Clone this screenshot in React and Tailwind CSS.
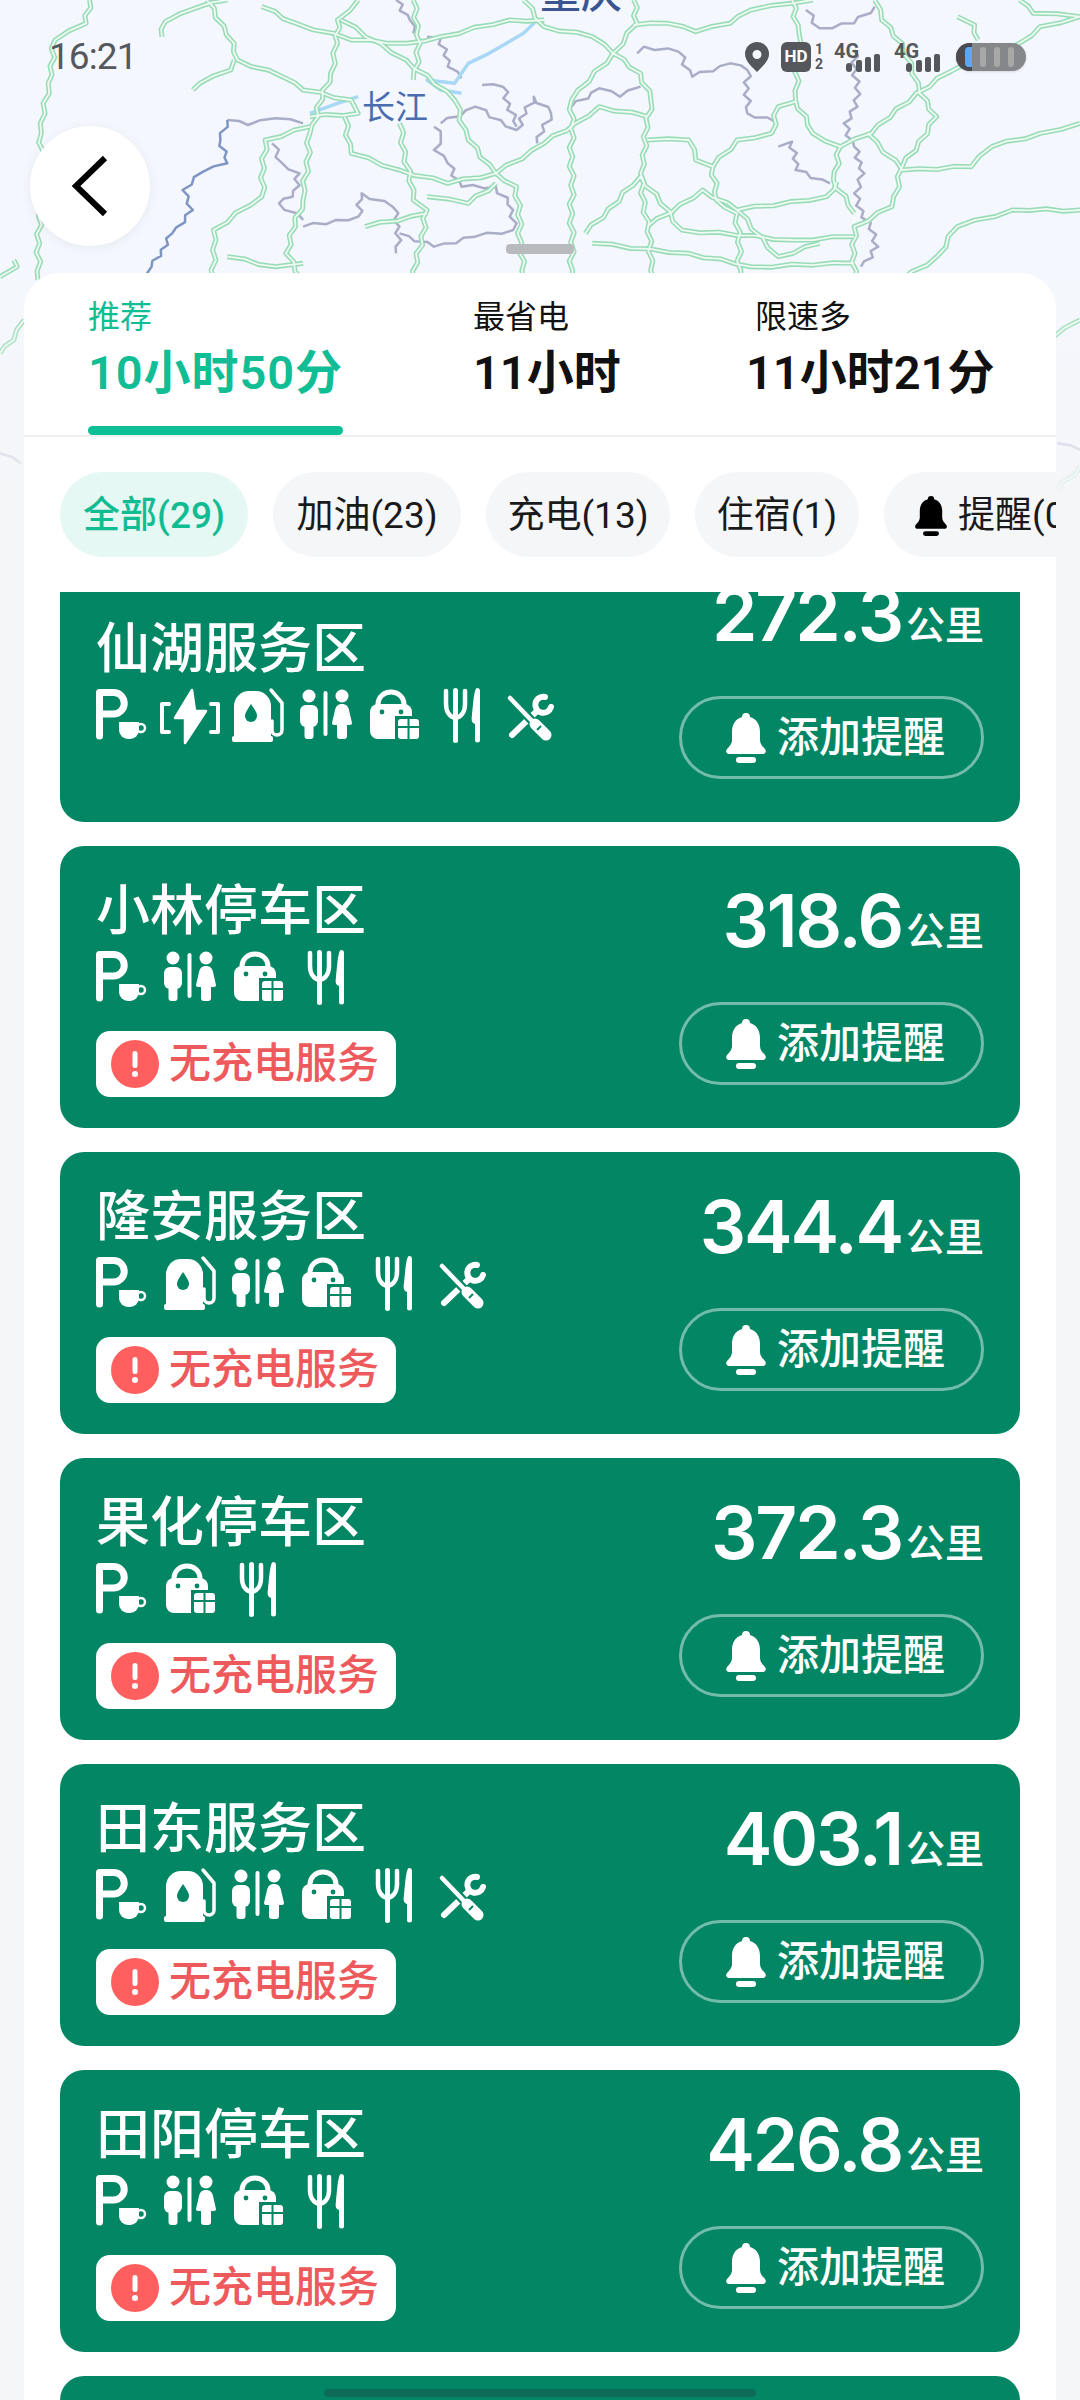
import React from 'react';

const GREEN = '#038664';

// road and border lines traced on a 1568x1560 canvas (stretched to 1080x520)
const ROADS = [
  'M130 0 L125 70 L80 120 L70 250 L60 400 L55 840',
  'M235 110 L240 65 L290 20 L330 0',
  'M300 0 L340 130 L345 180 L410 230 L440 270 L510 300 L520 340 L450 350',
  'M380 20 L430 70 L510 120 L590 130 L640 110 L740 60 L790 60',
  'M520 0 L490 60 L490 130 L480 220 L450 400 L440 600 L415 760 L440 840',
  'M340 180 L335 210 L290 250 L280 270',
  'M760 0 L790 80 L860 110 L890 160 L930 220 L945 300 L930 520 L950 840',
  'M920 0 L925 70 L890 160 L830 300 L830 840',
  'M920 75 L970 70 L1010 95 L1060 70 L1090 30 L1150 10 L1180 0',
  'M1270 0 L1280 60 L1310 130 L1335 280 L1360 350 L1310 500 L1295 620 L1240 680 L1240 840',
  'M1150 0 L1160 100 L1155 300 L1180 400 L1220 440 L1210 540 L1240 640',
  'M1390 50 L1415 75 L1420 120',
  'M1568 50 L1510 80 L1480 130 L1380 215 L1330 280 L1265 400 L1220 440',
  'M1568 370 L1510 400 L1440 440 L1410 500 L1310 510 L1260 400',
  'M1568 630 L1470 630 L1390 680 L1360 770 L1310 840',
  'M720 520 L790 430 L835 370 L870 320 L940 350',
  'M500 350 L510 460 L580 510 L650 550 L720 520 L750 560 L760 840',
  'M580 370 L600 600 L620 630 L600 840',
  'M620 590 L680 610 L720 550',
  'M310 840 L310 690 L380 590 L385 420 L450 380',
  'M530 680 L620 640',
  'M940 420 L1000 420 L1010 480 L1035 500 L1040 600 L1070 640 L1075 840',
  'M1035 500 L1070 420 L1120 400 L1130 320 L1155 305',
  'M940 680 L1020 570 L1070 630 L1200 590 L1215 545',
  'M850 700 L930 530 L990 690 L1150 720 L1240 710',
  'M1070 630 L1130 770 L1190 730',
  'M860 730 L1000 760 L1090 800 L1240 790',
  'M330 770 L400 800 L440 790',
  'M495 60 L590 180 L660 300 L680 420 L720 520',
  'M600 0 L610 130 L600 240',
  'M1480 0 L1500 40 L1568 50',
  'M0 830 L25 800 L20 780',
  'M0 1060 L20 1020 L35 960',
  'M1530 1010 L1568 960',
  'M1535 1470 L1568 1400',
];
const BORDERS = [
  'M330 360 L360 375 L400 355 L440 370',
  'M395 430 L410 490 L435 520 L425 590 L405 610 L440 660',
  'M440 680 L520 650 L525 580 L570 620 L580 680 L575 760',
  'M630 380 L640 410 L630 450 L650 490 L670 560 L720 560 L745 630 L745 690 L690 710 L630 740 L580 700',
  'M640 370 L690 320 L750 390 L775 290 L800 340 L780 430',
  'M700 255 L730 260 L750 380',
  'M830 320 L870 265 L900 290 L930 260',
  'M925 160 L935 140 L985 155 L1005 230 L1060 190 L1085 210 L1085 340 L1125 365',
  'M1130 440 L1150 425 L1155 510 L1205 550',
  'M1170 30 L1190 85 L1240 70 L1270 20',
  'M1240 150 L1245 320 L1225 370 L1240 440 L1255 520 L1240 580 L1275 740 L1250 800',
  'M620 110 L640 115 L650 200 L670 235',
  'M575 0 L595 60 L600 100',
  'M0 1360 L30 1390',
  'M1535 1330 L1568 1350',
];

// roads on the map are never straight, so break each segment into small steps
function wiggle(d, step, amp) {
  const pts = d.slice(1).split(' L').map((p) => p.trim().split(' ').map(Number));
  const out = [pts[0]];
  let flip = 1;
  for (let i = 1; i < pts.length; i++) {
    const [ax, ay] = pts[i - 1];
    const [bx, by] = pts[i];
    const len = Math.hypot(bx - ax, by - ay);
    const n = Math.max(1, Math.round(len / step));
    for (let k = 1; k <= n; k++) {
      const t = k / n;
      const off = k === n ? 0 : amp * flip * (k % 3 === 0 ? 0.4 : 1);
      flip = -flip;
      out.push([ax + (bx - ax) * t + ((by - ay) / len) * off, ay + (by - ay) * t - ((bx - ax) / len) * off]);
    }
  }
  return 'M' + out.map((p) => p[0].toFixed(1) + ' ' + p[1].toFixed(1)).join(' L');
}

const ROAD_PATHS = ROADS.map((d) => wiggle(d, 28, 3.5));
const BORDER_PATHS = BORDERS.map((d) => wiggle(d, 18, 5));

function MapLines() {
  return (
    <svg className="absolute top-0 left-0" width="1080" height="520" viewBox="0 0 1568 1560" preserveAspectRatio="none" fill="none" strokeLinejoin="round">
      {BORDER_PATHS.map((d) => <path key={d} d={d} stroke="#a9adc8" strokeWidth="2.5" vectorEffect="non-scaling-stroke" />)}
      <path d={wiggle('M330 360 L320 420 L330 490 L295 515 L265 570 L280 630 L250 700 L220 800 L215 840', 18, 4)} stroke="#7f96c4" strokeWidth="2.5" vectorEffect="non-scaling-stroke" />
      <path d="M780 60 L760 100 L710 160 L680 190 L660 250 L620 240 L640 270 L670 280 M520 290 L490 310 L450 340" stroke="#a9d8f6" strokeWidth="3.5" vectorEffect="non-scaling-stroke" />
      {ROAD_PATHS.map((d) => <path key={d} d={d} stroke="#98dcb6" strokeWidth="5" vectorEffect="non-scaling-stroke" />)}
      {ROAD_PATHS.map((d) => <path key={d + 'c'} d={d} stroke="#f0faf5" strokeWidth="1.8" vectorEffect="non-scaling-stroke" />)}
    </svg>
  );
}

function Cell({ children }) {
  return (
    <svg width="68" height="60" viewBox="0 0 68 60" fill="none" className="shrink-0">{children}</svg>
  );
}

const ICONS = {
  park: (
    <g transform="translate(8 2)">
      <path d="M3.5 47V3.500h14a10.750 10.750 0 0 1 0 21.500H3.500" stroke="#fff" strokeWidth="7" strokeLinecap="round" strokeLinejoin="round" />
      <rect x="20" y="30" width="34" height="24" fill={GREEN} />
      <path d="M23 33h20v8a9 9 0 0 1-9 9h-2a9 9 0 0 1-9-9z" fill="#fff" />
      <circle cx="45" cy="39" r="4" stroke="#fff" strokeWidth="2.5" />
    </g>
  ),
  charge: (
    <g transform="translate(4 1)">
      <path d="M9 16H2v28h7M51 16h7v28h-7" stroke="#fff" strokeWidth="4" strokeLinecap="round" strokeLinejoin="round" />
      <path d="M32 2 15 30h10l0 25 21-32H35z" fill="#fff" stroke="#fff" strokeWidth="2.5" strokeLinejoin="round" />
    </g>
  ),
  pump: (
    <g transform="translate(8 2)">
      <path d="M2 50V17A15 15 0 0 1 17 2h7a15 15 0 0 1 15 15v33z" fill="#fff" />
      <rect x="0" y="47" width="41" height="6" rx="2" fill="#fff" />
      <path d="M19 15c4 6 6 9 6 12a6 6 0 0 1-12 0c0-3 2-6 6-12z" fill={GREEN} />
      <path d="M39 1l11 13v27a5 5 0 0 1-10 0v-9" stroke="#fff" strokeWidth="3.5" strokeLinecap="round" strokeLinejoin="round" />
    </g>
  ),
  toilet: (
    <g transform="translate(8 2)">
      <circle cx="9" cy="7" r="6.500" fill="#fff" />
      <rect x="0" y="16" width="18" height="22" rx="6" fill="#fff" />
      <rect x="4.500" y="28" width="9" height="22" rx="3" fill="#fff" />
      <rect x="23.500" y="2" width="4" height="45" rx="2" fill="#fff" />
      <circle cx="42" cy="7" r="6.500" fill="#fff" />
      <path d="M42 15c4 0 6 2 7 6l3 13a2 2 0 0 1-2 2H34a2 2 0 0 1-2-2l3-13c1-4 3-6 7-6z" fill="#fff" />
      <rect x="37" y="30" width="10" height="20" rx="3" fill="#fff" />
    </g>
  ),
  bag: (
    <g transform="translate(10 3)">
      <path d="M8 20v-6a13 12 0 0 1 26 0v6" stroke="#fff" strokeWidth="5" />
      <rect x="0" y="14" width="42" height="35" rx="8" fill="#fff" />
      <circle cx="12" cy="22" r="2.400" fill={GREEN} />
      <circle cx="31" cy="22" r="2.400" fill={GREEN} />
      <rect x="25" y="26" width="27" height="27" fill={GREEN} />
      <rect x="28" y="29" width="21" height="20" rx="3" fill="#fff" />
      <rect x="37.500" y="29" width="2" height="20" fill={GREEN} />
      <rect x="28" y="36" width="21" height="2" fill={GREEN} />
    </g>
  ),
  fork: (
    <g transform="translate(16 1)">
      <rect x="9" y="0" width="5" height="55" rx="2.500" fill="#fff" />
      <path d="M2 3v13c0 8 4 13 9.500 14M21 3v13c0 8-4 13-9.500 14" stroke="#fff" strokeWidth="4.500" strokeLinecap="round" />
      <path d="M33 0c2 0 3 1 3 3v49a2.500 2.500 0 0 1-5 0V36c-3-1-4-3-3-9 1-9 2-27 5-27z" fill="#fff" />
    </g>
  ),
  tools: (
    <g transform="translate(11 7)">
      <path d="M5 41 30 17" stroke="#fff" strokeWidth="6" strokeLinecap="round" />
      <path d="M38 3A8 8 0 1 0 44 13" stroke="#fff" strokeWidth="6" strokeLinecap="round" />
      <path d="M2 3 27 29" stroke={GREEN} strokeWidth="9" />
      <path d="M3 4 26 28" stroke="#fff" strokeWidth="4.500" strokeLinecap="round" />
      <path d="M28 30 39 41" stroke={GREEN} strokeWidth="15" />
      <path d="M28 30 39 41" stroke="#fff" strokeWidth="11" strokeLinecap="round" />
      <path d="M30 36l4-4" stroke={GREEN} strokeWidth="2" />
    </g>
  ),
};

function Bell({ className }) {
  return (
    <svg className={className} viewBox="0 0 40 50" fill="currentColor">
      <path d="M20 0a4 4 0 0 1 4 4c7 2 10 8 10 15v8c0 4 3 7 5 9 2 3 0 5-2 5H3c-2 0-4-2-2-5 2-2 5-5 5-9v-8C6 12 9 6 16 4a4 4 0 0 1 4-4zM13 44h14a3 3 0 0 1 0 6H13a3 3 0 0 1 0-6z" />
    </svg>
  );
}

function Signal() {
  return (
    <svg width="47" height="30" viewBox="0 0 47 30" fill="#54575b">
      <text x="0" y="16" fontSize="20" fontWeight="700" fontFamily="Roboto">4G</text>
      <rect x="12" y="21" width="6" height="9" rx="3" />
      <rect x="22" y="18" width="6" height="12" rx="2" />
      <rect x="31" y="15" width="6" height="15" rx="2" />
      <rect x="40" y="12" width="6" height="18" rx="2" />
    </svg>
  );
}

function StatusBar() {
  return (
    <div className="flex items-center justify-between h-[114px] pl-[49px] pr-[54px]">
      <span className="text-[37px] tracking-tight text-[#55585c]">16:21</span>
      <div className="flex items-center">
        <svg width="24" height="30" viewBox="0 0 24 30" fill="#54575b">
          <path d="M12 0a12 12 0 0 1 12 12c0 7-7 13-12 18C7 25 0 19 0 12A12 12 0 0 1 12 0zm0 8a4.500 4.500 0 1 0 0 9 4.500 4.500 0 0 0 0-9z" />
        </svg>
        <div className="ml-3 w-[30px] h-[30px] rounded-md bg-[#54575b] text-white text-[17px] font-bold flex items-center justify-center">HD</div>
        <div className="ml-1 flex flex-col text-[14px] leading-[15px] font-bold text-[#54575b]">
          <span>1</span>
          <span>2</span>
        </div>
        <div className="ml-[11px]"><Signal /></div>
        <div className="ml-[13px]"><Signal /></div>
        <div className="ml-[15px] w-[70px] h-[28px] rounded-full bg-[#85878a] overflow-hidden flex items-center shadow-sm">
          <div className="w-[16px] h-full bg-[#4a4a50] flex items-center justify-end">
            <div className="w-[7px] h-[20px] rounded-l-sm bg-[#5aa8f5]" />
          </div>
          <div className="flex-1 flex justify-around pl-1 pr-2">
            <div className="w-[6px] h-[20px] rounded-full bg-[#a8a8a8]" />
            <div className="w-[6px] h-[20px] rounded-full bg-[#a8a8a8]" />
            <div className="w-[6px] h-[20px] rounded-full bg-[#a8a8a8]" />
          </div>
        </div>
      </div>
    </div>
  );
}

function Chip({ active, bell, children, className }) {
  const tone = active ? 'bg-[#e6f8f3] text-[#12bc92] font-medium' : 'bg-[#f5f6f8] text-[#1a1a1a]';
  return (
    <div className={`h-[85px] pt-[2px] rounded-full flex items-center shrink-0 text-[37px] ${tone} ${className}`}>
      {bell && <Bell className="w-[34px] h-[40px] mr-[10px] text-black" />}
      {children}
    </div>
  );
}

function Card({ name, icons, km, noCharge }) {
  return (
    <div className="h-[282px] shrink-0 rounded-[24px] bg-[#038664] px-9 flex items-center justify-between text-white">
      <div className="pt-1">
        <div className="text-[54px] leading-[62px] font-medium">{name}</div>
        <div className="flex -ml-2 mt-[6px] h-[60px]">
          {icons.map((k, i) => <Cell key={i}>{ICONS[k]}</Cell>)}
        </div>
        {noCharge && (
          <div className="mt-[22px] w-[300px] h-[66px] rounded-[14px] bg-white flex items-center pl-[15px]">
            <svg width="48" height="48" viewBox="0 0 48 48">
              <circle cx="24" cy="24" r="24" fill="#ff5f5f" />
              <rect x="21.500" y="11" width="5" height="17" rx="2.500" fill="#fff" />
              <circle cx="24" cy="34" r="3" fill="#fff" />
            </svg>
            <span className="ml-[10px] text-[42px] leading-none font-medium text-[#ee5a5c]">无充电服务</span>
          </div>
        )}
      </div>
      <div className="flex flex-col items-end pb-2">
        <div className="flex items-baseline h-[80px]">
          <span className="font-['Inter'] text-[73px] leading-[80px] font-semibold tracking-[-0.03em]">{km}</span>
          <span className="ml-[4px] text-[39px] leading-none font-medium -translate-y-0.5">公里</span>
        </div>
        <div className="mt-[41px] pt-[1px] w-[305px] h-[83px] rounded-full border-[3px] border-white/45 flex items-center pl-[44px]">
          <Bell className="w-[40px] h-[50px] text-white" />
          <span className="ml-[11px] text-[42px] leading-none font-medium">添加提醒</span>
        </div>
      </div>
    </div>
  );
}

const CARDS = [
  { name: '仙湖服务区', km: '272.3', icons: ['park', 'charge', 'pump', 'toilet', 'bag', 'fork', 'tools'] },
  { name: '小林停车区', km: '318.6', noCharge: true, icons: ['park', 'toilet', 'bag', 'fork'] },
  { name: '隆安服务区', km: '344.4', noCharge: true, icons: ['park', 'pump', 'toilet', 'bag', 'fork', 'tools'] },
  { name: '果化停车区', km: '372.3', noCharge: true, icons: ['park', 'bag', 'fork'] },
  { name: '田东服务区', km: '403.1', noCharge: true, icons: ['park', 'pump', 'toilet', 'bag', 'fork', 'tools'] },
  { name: '田阳停车区', km: '426.8', noCharge: true, icons: ['park', 'toilet', 'bag', 'fork'] },
];

export default function App() {
  return (
    <div className="relative w-[1080px] h-[2400px] overflow-hidden bg-[#f5f6f8] font-['Roboto','Noto_Sans_CJK_SC',sans-serif]">
      <div className="absolute top-0 left-0 w-full h-[520px] overflow-hidden bg-[#f4f7fd]">
        <MapLines />
        <div className="absolute top-[280px] left-0 w-full h-[240px] bg-linear-to-b from-transparent to-[#f5f6f8]" />
        <span className="absolute left-[540px] top-[-30px] text-[41px] leading-[48px] font-medium text-[#3a5590]">重庆</span>
        <span className="absolute left-[362px] top-[89px] text-[33px] leading-[38px] text-[#4a6db0]">长江</span>
      </div>

      <div className="relative flex flex-col h-full">
        <StatusBar />
        <button className="ml-[30px] mt-3 w-[120px] h-[120px] rounded-full bg-white shadow-[0_2px_12px_rgba(0,0,0,0.06)] flex items-center justify-center shrink-0">
          <svg width="40" height="62" viewBox="0 0 40 62" fill="none">
            <path d="M35 3 6 31l29 28" stroke="#000" strokeWidth="6" />
          </svg>
        </button>
        <div className="self-center mt-[-2px] w-[68px] h-[10px] rounded-sm bg-[#b8babd]" />

        <div className="mx-6 mt-[19px] flex-1 min-h-0 flex flex-col rounded-t-[36px] bg-white">
          <div className="h-[164px] shrink-0 flex pl-[64px] border-b-2 border-[#eeeff1]">
            <div className="w-[255px] h-full relative pt-[24px] text-[#10bd94]">
              <div className="text-[32px] leading-[40px]">推荐</div>
              <div className="mt-[8px] text-[47px] leading-[56px] font-semibold tracking-[0.02em] whitespace-nowrap">10小时50分</div>
              <div className="absolute left-0 bottom-0 w-full h-[9px] rounded-full bg-[#0dbf94]" />
            </div>
            <div className="ml-[130px] w-[142px] pt-[24px] text-[#111]">
              <div className="text-[32px] leading-[40px]">最省电</div>
              <div className="mt-[8px] text-[47px] leading-[56px] font-semibold whitespace-nowrap">11小时</div>
            </div>
            <div className="ml-[131px] pt-[24px] text-[#111]">
              <div className="ml-[9px] text-[32px] leading-[40px]">限速多</div>
              <div className="mt-[8px] text-[47px] leading-[56px] font-semibold whitespace-nowrap">11小时21分</div>
            </div>
          </div>

          <div className="h-[155px] shrink-0 flex items-start pt-[35px] pl-9 gap-[25px] overflow-hidden">
            <Chip active className="w-[188px] justify-center">全部(29)</Chip>
            <Chip className="w-[188px] justify-center">加油(23)</Chip>
            <Chip className="w-[184px] justify-center">充电(13)</Chip>
            <Chip className="w-[164px] justify-center">住宿(1)</Chip>
            <Chip bell className="w-[220px] pl-[30px] whitespace-nowrap">提醒(0)</Chip>
          </div>

          <div className="flex-1 min-h-0 overflow-hidden px-9">
            <div className="flex flex-col gap-6 -mt-[52px]">
              {CARDS.map((c) => <Card key={c.name} {...c} />)}
              <div className="h-[282px] shrink-0 rounded-[24px] bg-[#038664]" />
            </div>
          </div>
        </div>
      </div>

      <div className="absolute left-[324px] top-[2389px] w-[432px] h-[8px] rounded-full bg-[#0d6b57]" />
    </div>
  );
}
